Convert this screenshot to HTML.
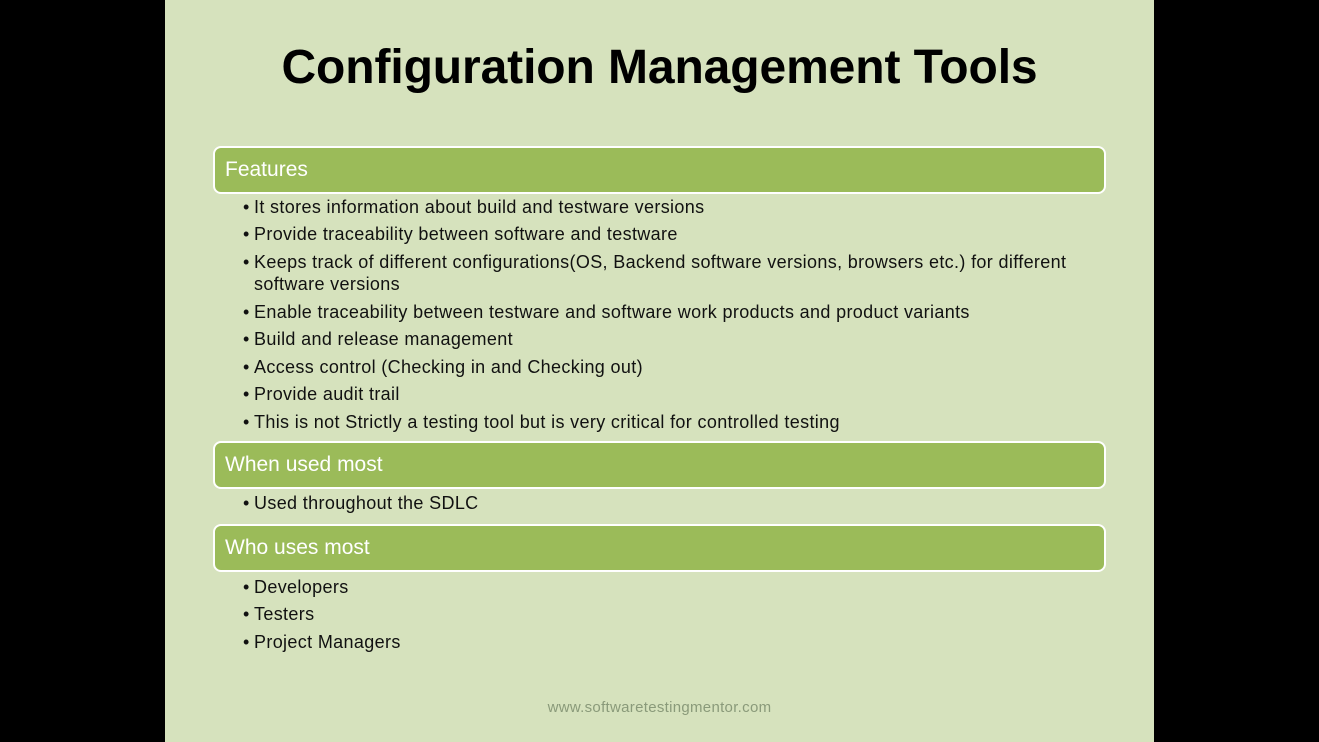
<!DOCTYPE html>
<html><head><style>
body{margin:0;width:1319px;height:742px;background:#000;position:relative;overflow:hidden;font-family:"Liberation Sans",sans-serif}
.s{position:absolute;left:165px;top:0;width:989px;height:742px;background:#d6e2bd}
.t{position:absolute;left:0;width:989px;top:40px;text-align:center;font-size:48px;font-weight:bold;color:#000;letter-spacing:-0.1px}
.bar{position:absolute;left:48px;width:879px;height:44px;background:#9bbb59;border:2px solid #fff;border-radius:8px;color:#fff;font-size:21px;line-height:44px;padding-left:10px;box-sizing:content-box}
.l{position:absolute;left:89px;font-size:18px;color:#111;white-space:nowrap;letter-spacing:0.35px}
.l:before{content:"•";position:absolute;left:-11px}
.l.n:before{content:""}
.f{position:absolute;top:699px;width:989px;text-align:center;color:#8a9a7a;font-size:15px;letter-spacing:0.3px}
</style></head><body><div class="s">
<div class="t">Configuration Management Tools</div>
<div class="bar" style="top:146px">Features</div>
<div class="l" style="top:197px">It stores information about build and testware versions</div>
<div class="l" style="top:224px">Provide traceability between software and testware</div>
<div class="l" style="top:252px">Keeps track of different configurations(OS, Backend software versions, browsers etc.) for different</div>
<div class="l n" style="top:274px;">software versions</div>
<div class="l" style="top:302px">Enable traceability between testware and software work products and product variants</div>
<div class="l" style="top:329px">Build and release management</div>
<div class="l" style="top:357px">Access control (Checking in and Checking out)</div>
<div class="l" style="top:384px">Provide audit trail</div>
<div class="l" style="top:412px">This is not Strictly a testing tool but is very critical for controlled testing</div>
<div class="bar" style="top:441px">When used most</div>
<div class="l" style="top:493px">Used throughout the SDLC</div>
<div class="bar" style="top:524px">Who uses most</div>
<div class="l" style="top:577px">Developers</div>
<div class="l" style="top:604px">Testers</div>
<div class="l" style="top:632px">Project Managers</div>
<div class="f">www.softwaretestingmentor.com</div>
</div>
</body></html>
